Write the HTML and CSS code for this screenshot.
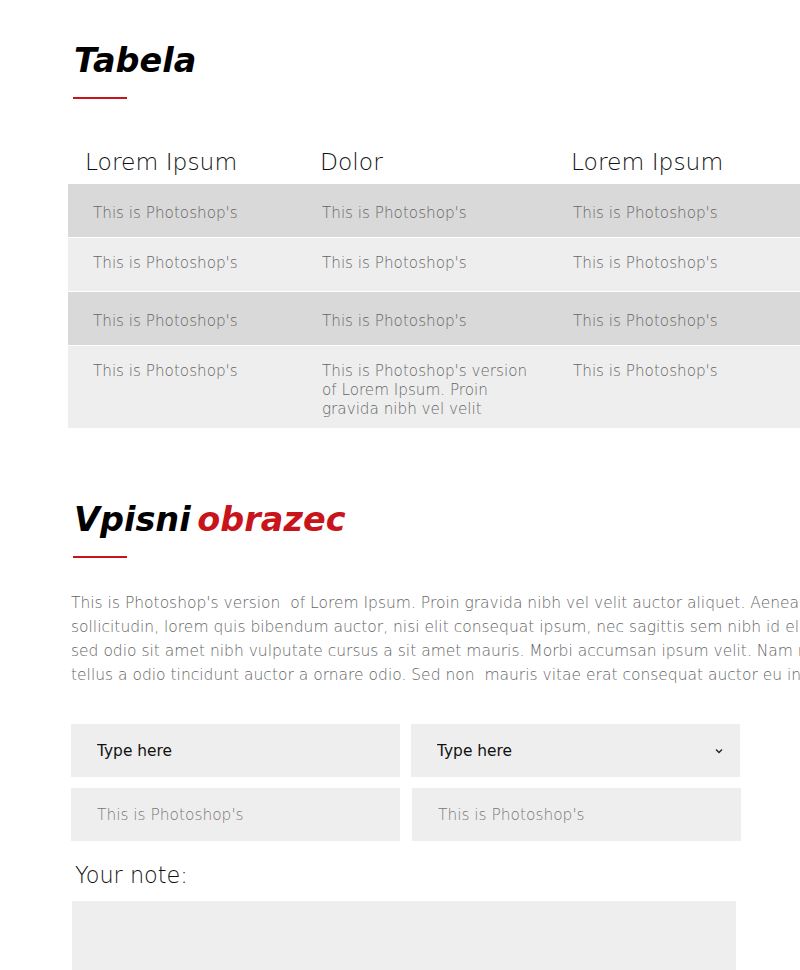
FILE: index.html
```html
<!DOCTYPE html>
<html lang="sl">
<head>
  <meta charset="UTF-8" />
  <meta name="viewport" content="width=device-width, initial-scale=1" />
  <title>Tabela in vpisni obrazec</title>
  <link rel="stylesheet" href="styles.css">
</head>
<body>
  <main class="page">
    <!-- Tabela -->
    <section class="block">
      <h2 class="title">Tabela</h2>
      <table class="data">
        <colgroup>
          <col class="col-1">
          <col class="col-2">
          <col>
        </colgroup>
        <thead>
          <tr>
            <th>Lorem Ipsum</th>
            <th>Dolor</th>
            <th>Lorem Ipsum</th>
          </tr>
        </thead>
        <tbody>
          <tr class="dark">
            <td>This is Photoshop's</td>
            <td>This is Photoshop's</td>
            <td>This is Photoshop's</td>
          </tr>
          <tr>
            <td>This is Photoshop's</td>
            <td>This is Photoshop's</td>
            <td>This is Photoshop's</td>
          </tr>
          <tr class="dark">
            <td>This is Photoshop's</td>
            <td>This is Photoshop's</td>
            <td>This is Photoshop's</td>
          </tr>
          <tr class="tall">
            <td>This is Photoshop's</td>
            <td><span class="wrap">This is Photoshop's version of Lorem Ipsum. Proin gravida nibh vel velit</span></td>
            <td>This is Photoshop's</td>
          </tr>
        </tbody>
      </table>
    </section>

    <!-- Vpisni obrazec -->
    <section class="block form-block">
      <h2 class="title">Vpisni <span class="accent">obrazec</span></h2>
      <p class="lead">This is Photoshop's version&nbsp; of Lorem Ipsum. Proin gravida nibh vel velit auctor aliquet. Aenean<br>
        sollicitudin, lorem quis bibendum auctor, nisi elit consequat ipsum, nec sagittis sem nibh id elit. Duis<br>
        sed odio sit amet nibh vulputate cursus a sit amet mauris. Morbi accumsan ipsum velit. Nam nec<br>
        tellus a odio tincidunt auctor a ornare odio. Sed non&nbsp; mauris vitae erat consequat auctor eu in elit.</p>

      <form class="form" onsubmit="return false">
        <div class="fields">
          <input class="field" type="text" value="Type here">
          <div class="select-wrap">
            <select class="field select">
              <option>Type here</option>
            </select>
            <svg class="chevron" width="8" height="6" viewBox="0 0 8 6"><path d="M1 1.5 L4 4.5 L7 1.5" fill="none" stroke="#222" stroke-width="1.3"/></svg>
          </div>
          <input class="field" type="text" placeholder="This is Photoshop's">
          <input class="field shift" type="text" placeholder="This is Photoshop's">
        </div>
        <label class="note-label" for="note">Your note:</label>
        <textarea class="note" id="note"></textarea>
      </form>
    </section>
  </main>
</body>
</html>
```

FILE: styles.css
```css
html, body {
  overflow-x: hidden;
}

body {
  margin: 0;
  font-family: 'DejaVu Sans', 'Liberation Sans', sans-serif;
  background-color: #fff;
  color: #222;
}

.page {
  width: 1000px;
  padding: 36px 0 0 71px;
}

/* Titles */
.title {
  margin: 0;
  font-size: 33.5px;
  font-weight: 700;
  font-style: italic;
  line-height: 50px;
  word-spacing: -5px;
  color: #000;
  padding-left: 3px;
}

.title::after {
  content: "";
  display: block;
  width: 54px;
  height: 2px;
  background-color: #c8151b;
  margin: 11px 0 0 -1px;
}

.accent {
  color: #c8151b;
}

/* Table */
.data {
  margin: 35px 0 0 -3px;
  border-collapse: collapse;
  width: 900px;
  table-layout: fixed;
}

.col-1 { width: 229px; }
.col-2 { width: 251px; }

.data th {
  font-size: 23.4px;
  font-weight: 200;
  text-align: left;
  color: #111;
  padding: 0 0 8px 23px;
  height: 42px;
  vertical-align: bottom;
}

.data th:first-child {
  padding-left: 17px;
}

.data td {
  font-size: 15.2px;
  font-weight: 200;
  color: #666;
  line-height: 19px;
  padding: 16px 0 18px 25px;
  vertical-align: top;
  background-color: #eeeeee;
  border-bottom: 1px solid #fff;
}

.data tr.dark td {
  background-color: #d9d9d9;
  padding: 20px 0 14px 25px;
}

.data tr.tall td {
  padding: 16px 0 9px 25px;
  border-bottom: 0;
}

.wrap {
  display: block;
  width: 212px;
}

/* Form block */
.form-block {
  margin-top: 67px;
}

.lead {
  margin: 33px 0 0;
  font-size: 15.5px;
  font-weight: 200;
  line-height: 24px;
  color: #666;
  white-space: nowrap;
}

.form {
  margin-top: 37px;
}

.fields {
  display: grid;
  grid-template-columns: 329px 329px;
  gap: 11px;
}

.field {
  box-sizing: border-box;
  width: 100%;
  height: 53px;
  border: 0;
  background-color: #eeeeee;
  padding: 0 26px;
  font-family: inherit;
  font-size: 15.4px;
  font-weight: 400;
  color: #111;
  outline: none;
}

.field::placeholder {
  color: #777;
  font-weight: 200;
}

.shift {
  margin-left: 1px;
}

.select-wrap {
  position: relative;
}

.select {
  appearance: none;
  -webkit-appearance: none;
  border-radius: 0;
}

.chevron {
  position: absolute;
  right: 17px;
  top: 24px;
  pointer-events: none;
}

.note-label {
  display: block;
  margin: 16px 0 0 4px;
  font-size: 22.4px;
  font-weight: 200;
  line-height: 36px;
  color: #111;
}

.note {
  display: block;
  box-sizing: border-box;
  width: 664px;
  height: 140px;
  margin: 8px 0 0 1px;
  border: 0;
  background-color: #eeeeee;
  resize: none;
  font-family: inherit;
}
```
